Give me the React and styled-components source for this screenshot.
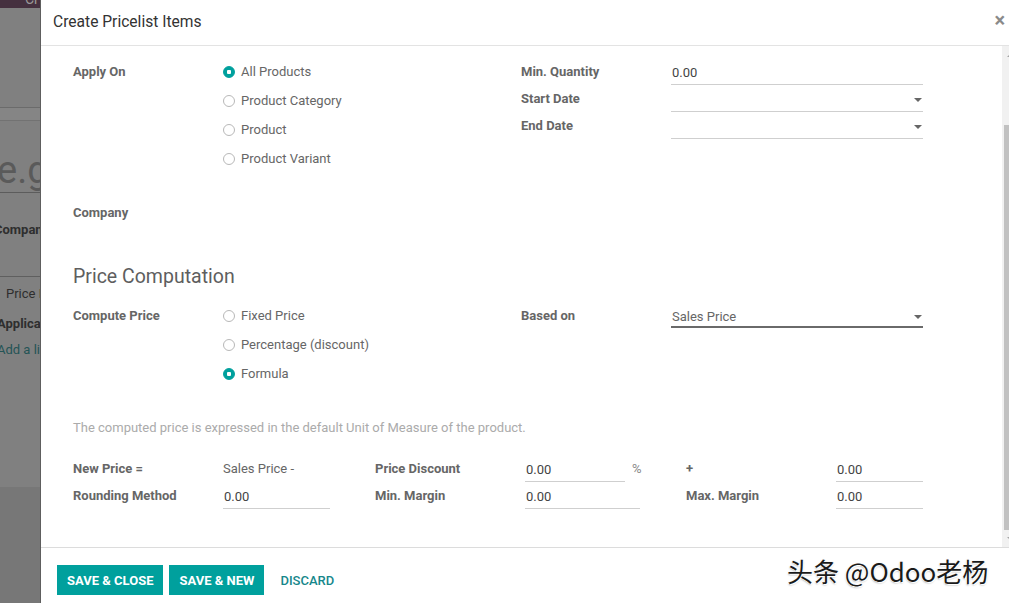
import React from "react";
import styled, { createGlobalStyle } from "styled-components";

const GlobalStyle = createGlobalStyle`
  html, body {
    margin: 0;
    padding: 0;
    background: #ffffff;
  }
  body {
    font-family: Roboto, "Noto Sans", sans-serif;
    font-size: 13px;
  }
  * {
    box-sizing: border-box;
  }
`;

const teal = "#00A09D";

const Radio = ({ checked, children }) => (
  <RadioItem>
    <RadioDot $checked={checked} />
    <span>{children}</span>
  </RadioItem>
);

const Field = ({ value, width, caret, strong }) => (
  <FieldLine $width={width} $strong={strong}>
    <span>{value}</span>
    {caret && <Caret />}
  </FieldLine>
);

const App = () => {
  return (
    <>
      <GlobalStyle />
      <Screen>
        <Behind>
          <BehindPage>
            <BehindNav>
              <NavCrumb>Cr</NavCrumb>
            </BehindNav>
            <BehindPanel />
            <BehindBand />
            <BehindTitle>
              <span>e.g</span>
            </BehindTitle>
            <BehindText $bold $top={27} $left={-6}>
              Company
            </BehindText>
            <BehindRule $top={36} />
            <BehindText $top={7} $left={6}>
              Price Rules
            </BehindText>
            <BehindText $bold $top={10} $left={-3}>
              Applicable On
            </BehindText>
            <BehindText $link $top={6} $left={-3}>
              Add a line
            </BehindText>
          </BehindPage>
        </Behind>

        <Modal>
          <Header>
            <Title>Create Pricelist Items</Title>
            <Close>×</Close>
          </Header>

          <Body>
            <Content>
              <TopGrid>
                <Group>
                  <Label $h={29}>Apply On</Label>
                  <RadioList>
                    <Radio checked>All Products</Radio>
                    <Radio>Product Category</Radio>
                    <Radio>Product</Radio>
                    <Radio>Product Variant</Radio>
                  </RadioList>
                  <Label $h={29} $top={25}>
                    Company
                  </Label>
                  <div />
                </Group>
                <Group $shift>
                  <Label $h={27}>Min. Quantity</Label>
                  <Field value="0.00" />
                  <Label $h={27}>Start Date</Label>
                  <Field caret />
                  <Label $h={27}>End Date</Label>
                  <Field caret />
                </Group>
              </TopGrid>

              <Heading>Price Computation</Heading>

              <TopGrid>
                <Group>
                  <Label $h={29}>Compute Price</Label>
                  <RadioList>
                    <Radio>Fixed Price</Radio>
                    <Radio>Percentage (discount)</Radio>
                    <Radio checked>Formula</Radio>
                  </RadioList>
                </Group>
                <Group $shift>
                  <Label $h={27}>Based on</Label>
                  <Field value="Sales Price" caret strong />
                </Group>
              </TopGrid>

              <Note>
                The computed price is expressed in the default Unit of Measure
                of the product.
              </Note>

              <FormulaGrid>
                <Label $h={27}>New Price =</Label>
                <Plain>Sales Price -</Plain>
                <Label $h={27}>Price Discount</Label>
                <Inline>
                  <Field value="0.00" width={100} />
                  <Unit>%</Unit>
                </Inline>
                <Label $h={27}>+</Label>
                <Field value="0.00" width={87} />

                <Label $h={27}>Rounding Method</Label>
                <Field value="0.00" width={107} />
                <Label $h={27}>Min. Margin</Label>
                <Field value="0.00" width={115} />
                <Label $h={27}>Max. Margin</Label>
                <Field value="0.00" width={87} />
              </FormulaGrid>
            </Content>

            <ScrollTrack>
              <ScrollArrow $up />
              <ScrollThumb />
              <ScrollArrow />
            </ScrollTrack>
          </Body>

          <Footer>
            <Button>Save &amp; Close</Button>
            <Button>Save &amp; New</Button>
            <Button $link>Discard</Button>
          </Footer>
        </Modal>

        <Watermark>头条 @Odoo老杨</Watermark>
      </Screen>
    </>
  );
};

export default App;

const Screen = styled.div`
  position: relative;
  width: 1009px;
  height: 603px;
  overflow: hidden;
  display: flex;
`;

/* page behind the dialog, dimmed by the backdrop */
const Behind = styled.div`
  flex: 0 0 41px;
  height: 100%;
  background: #777777;
  border-right: 1px solid #5e5e5e;
  overflow: hidden;
`;

const BehindPage = styled.div`
  height: 487px;
  background: #808080;
  display: flex;
  flex-direction: column;
  white-space: nowrap;
`;

const BehindNav = styled.div`
  height: 8px;
  background: #45303f;
  overflow: hidden;
  padding-left: 25px;
`;

const NavCrumb = styled.div`
  margin-top: -9px;
  line-height: 16px;
  font-size: 14px;
  color: #9b9b9b;
`;

const BehindPanel = styled.div`
  height: 100px;
  border-bottom: 1px solid #6b6b6b;
`;

const BehindBand = styled.div`
  height: 13px;
  background: #858585;
  border-bottom: 1px solid #727272;
`;

const BehindTitle = styled.div`
  margin-top: 30px;
  height: 42px;
  line-height: 38px;
  font-size: 38px;
  color: #5a5a5a;
  border-bottom: 1px solid #5c5c5c;
  span {
    margin-left: -3px;
  }
`;

const BehindText = styled.div`
  margin-top: ${(p) => p.$top}px;
  margin-left: ${(p) => p.$left}px;
  height: 20px;
  line-height: 20px;
  font-size: 13px;
  font-weight: ${(p) => (p.$bold ? 700 : 400)};
  color: ${(p) => (p.$link ? "#245456" : "#2e2e2e")};
`;

const BehindRule = styled.div`
  margin-top: ${(p) => p.$top}px;
  border-top: 1px solid #5f5f5f;
`;

/* dialog */
const Modal = styled.div`
  flex: 0 0 978px;
  height: 100%;
  background: #ffffff;
  display: flex;
  flex-direction: column;
`;

const Header = styled.div`
  height: 46px;
  flex: 0 0 46px;
  border-bottom: 1px solid #e3e3e3;
  display: flex;
  align-items: center;
  justify-content: space-between;
  padding: 0 14px 0 12px;
`;

const Title = styled.div`
  font-size: 15.6px;
  color: #333333;
  margin-top: -2px;
`;

const Close = styled.div`
  font-size: 20px;
  font-weight: 700;
  color: #8a8a8a;
  margin-top: -6px;
`;

const Body = styled.div`
  flex: 1;
  display: flex;
  min-height: 0;
`;

const Content = styled.div`
  flex: 1;
  padding: 11px 0 0 32px;
  color: #666666;
`;

const TopGrid = styled.div`
  display: grid;
  grid-template-columns: 448px 402px;
  align-items: start;
`;

const Group = styled.div`
  display: grid;
  grid-template-columns: 150px 252px;
  align-content: start;
  margin-top: ${(p) => (p.$shift ? "1px" : 0)};
`;

const Label = styled.div`
  height: ${(p) => p.$h}px;
  line-height: ${(p) => p.$h}px;
  margin-top: ${(p) => p.$top || 0}px;
  font-weight: 700;
  color: #666666;
  white-space: nowrap;
`;

const RadioList = styled.div`
  display: flex;
  flex-direction: column;
`;

const RadioItem = styled.div`
  height: 29px;
  display: flex;
  align-items: center;
  gap: 6px;
  color: #666666;
`;

const RadioDot = styled.span`
  width: 12px;
  height: 12px;
  border-radius: 50%;
  flex: 0 0 12px;
  border: 1px solid ${(p) => (p.$checked ? teal : "#b8b8b8")};
  background: ${(p) =>
    p.$checked
      ? `radial-gradient(circle, #ffffff 0 2px, ${teal} 2.5px)`
      : "#ffffff"};
`;

const FieldLine = styled.div`
  width: ${(p) => (p.$width ? p.$width + "px" : "100%")};
  height: ${(p) => (p.$strong ? "26px" : "27px")};
  display: flex;
  align-items: center;
  justify-content: space-between;
  padding: ${(p) => (p.$strong ? "5px" : "3px")} 0 0 1px;
  border-bottom: ${(p) =>
    p.$strong ? "2px solid #6a6a6a" : "1px solid #cfcfcf"};
  color: ${(p) => (p.$strong ? "#666666" : "#444444")};
`;

const Caret = styled.span`
  width: 0;
  height: 0;
  margin-right: 1px;
  border-left: 4px solid transparent;
  border-right: 4px solid transparent;
  border-top: 4px solid #666666;
`;

const Heading = styled.div`
  margin: 38px 0 12px;
  height: 24px;
  line-height: 24px;
  font-size: 19.5px;
  color: #5e5e5e;
`;

const Note = styled.div`
  margin-top: 30px;
  height: 20px;
  line-height: 20px;
  color: #ababab;
`;

const FormulaGrid = styled.div`
  margin-top: 17px;
  display: grid;
  grid-template-columns: 150px 152px 150px 161px 150px 87px;
  align-items: center;
`;

const Plain = styled.div`
  height: 27px;
  line-height: 27px;
  color: #666666;
`;

const Inline = styled.div`
  display: flex;
  align-items: center;
  gap: 7px;
`;

const Unit = styled.span`
  color: #8a8a8a;
`;

const ScrollTrack = styled.div`
  flex: 0 0 17px;
  background: #f1f1f1;
  display: flex;
  flex-direction: column;
  align-items: center;
`;

const ScrollArrow = styled.div`
  flex: 0 0 17px;
  width: 17px;
  margin-top: ${(p) => (p.$up ? 0 : "auto")};
  display: flex;
  align-items: center;
  justify-content: center;
  &::before {
    content: "";
    width: 0;
    height: 0;
    border-left: 4px solid transparent;
    border-right: 4px solid transparent;
    ${(p) =>
      p.$up
        ? "border-bottom: 4px solid #a3a3a3;"
        : "border-top: 4px solid #a3a3a3;"}
  }
`;

const ScrollThumb = styled.div`
  margin-top: 62px;
  width: 13px;
  height: 405px;
  background: #c1c1c1;
`;

const Footer = styled.div`
  flex: 0 0 56px;
  border-top: 1px solid #dcdcdc;
  display: flex;
  align-items: flex-start;
  gap: 6px;
  padding: 17px 16px 0;
`;

const Button = styled.button`
  height: 30px;
  padding: 0 10px;
  border: none;
  border-radius: 0;
  background: ${(p) => (p.$link ? "transparent" : teal)};
  color: ${(p) => (p.$link ? "#16878b" : "#ffffff")};
  font-family: Roboto, "Noto Sans", sans-serif;
  font-size: 13px;
  font-weight: ${(p) => (p.$link ? 500 : 700)};
  text-transform: uppercase;
  cursor: pointer;
`;

const Watermark = styled.div`
  position: absolute;
  left: 787px;
  top: 555px;
  font-family: "Noto Sans CJK SC", "Noto Sans", sans-serif;
  font-size: 26px;
  line-height: 32px;
  color: #1a1a1a;
  white-space: nowrap;
  text-shadow: 1px 1px 0 #ffffff, -1px 0 0 #ffffff, 0 1px 2px #999999;
`;
